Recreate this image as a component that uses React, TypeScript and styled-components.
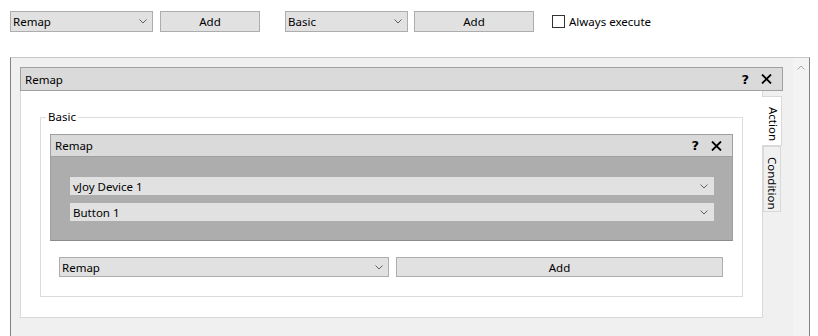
import React from "react"
import styled, { createGlobalStyle } from "styled-components"

const GlobalStyle = createGlobalStyle`
  html, body {
    margin: 0;
    padding: 0;
    background: #ffffff;
    overflow: hidden;
  }
  body {
    font-family: "Segoe UI", "Noto Sans", "Open Sans", sans-serif;
    font-size: 11.5px;
    color: #000000;
  }
`

const Page = styled.div`
  width: 818px;
  height: 336px;
  overflow: hidden;
`
const Toolbar = styled.div`
  display: flex;
  align-items: center;
  height: 21px;
  padding: 11px 0 0 10px;
`
const ComboBox = styled.div<{ $w: number; $h: number; $flat?: boolean; $ml?: number }>`
  display: flex;
  align-items: center;
  justify-content: space-between;
  box-sizing: border-box;
  width: ${p => p.$w}px;
  height: ${p => p.$h}px;
  margin-left: ${p => p.$ml || 0}px;
  padding: 0 5px 0 2px;
  background: #e1e1e1;
  border: 1px solid ${p => (p.$flat ? "#e1e1e1" : "#adadad")};
  white-space: nowrap;
`
const Button = styled.div<{ $w: number; $h: number; $ml: number }>`
  display: flex;
  align-items: center;
  justify-content: center;
  box-sizing: border-box;
  width: ${p => p.$w}px;
  height: ${p => p.$h}px;
  margin-left: ${p => p.$ml}px;
  background: #e1e1e1;
  border: 1px solid #adadad;
`
const Check = styled.div`
  box-sizing: border-box;
  width: 13px;
  height: 13px;
  margin-left: 18px;
  margin-right: 4px;
  background: #ffffff;
  border: 1px solid #333333;
`
const ScrollArea = styled.div`
  display: flex;
  box-sizing: border-box;
  width: 800px;
  height: 280px;
  margin: 25px 0 0 10px;
  border: 1px solid #828282;
  border-top-color: #c8c8c8;
  border-bottom: none;
`
const Viewport = styled.div`
  flex: 1;
  background: #f0f0f0;
  padding: 9px 10px 0 9px;
`
const ScrollBar = styled.div`
  display: flex;
  justify-content: center;
  width: 16px;
  padding-top: 7px;
  box-sizing: border-box;
  background: #f3f3f3;
`
const TitleBar = styled.div<{ $h: number }>`
  display: flex;
  align-items: center;
  box-sizing: border-box;
  height: ${p => p.$h}px;
  padding: 0 10px 0 4px;
  background: #dadada;
  border: 1px solid #a0a0a0;
`
const Title = styled.span`
  flex: 1;
`
const Help = styled.span`
  font-family: "DejaVu Sans", sans-serif;
  font-weight: bold;
  font-size: 13px;
  margin-right: 12px;
`
const TabWidget = styled.div`
  display: flex;
`
const Pane = styled.div`
  box-sizing: border-box;
  width: 743px;
  padding: 26px 19px 20px 19px;
  background: #ffffff;
  border: 1px solid #d9d9d9;
  border-top: none;
`
const TabColumn = styled.div`
  display: flex;
  flex-direction: column;
  padding-top: 5px;
`
const Tab = styled.div<{ $active?: boolean; $h: number }>`
  display: flex;
  justify-content: center;
  box-sizing: border-box;
  width: ${p => (p.$active ? 20 : 18)}px;
  height: ${p => p.$h}px;
  margin-left: ${p => (p.$active ? -1 : 0)}px;
  padding-top: ${p => (p.$active ? 6 : 8)}px;
  background: ${p => (p.$active ? "#ffffff" : "#f0f0f0")};
  border: 1px solid #d9d9d9;
  border-left: ${p => (p.$active ? "none" : "1px solid #d9d9d9")};
  writing-mode: vertical-rl;
`
const GroupBox = styled.div`
  position: relative;
  padding: 16px 9px 19px 9px;
  border: 1px solid #dcdcdc;
`
const GroupLabel = styled.span`
  position: absolute;
  top: -9px;
  left: 5px;
  padding: 0 2px;
  background: #ffffff;
  line-height: 16px;
`
const InnerBody = styled.div`
  display: flex;
  flex-direction: column;
  gap: 8px;
  padding: 20px 19px 19px 19px;
  background: #adadad;
  border: 1px solid #a0a0a0;
  border-top: none;
  border-bottom-color: #8c8c8c;
`
const AddRow = styled.div`
  display: flex;
  margin: 16px 9px 0 9px;
`

function Chevron({ up }: { up?: boolean }) {
  return (
    <svg width="8" height="5" viewBox="0 0 8 5">
      <polyline
        points={up ? "0.5,4.5 4,1 7.5,4.5" : "0.5,0.5 4,4 7.5,0.5"}
        fill="none"
        stroke={up ? "#a6a6a6" : "#606060"}
        strokeWidth="1"
      />
    </svg>
  )
}

function Close() {
  return (
    <svg width="11" height="10" viewBox="0 0 11 10">
      <path d="M1 0.5 L10 9.5 M10 0.5 L1 9.5" stroke="#000" strokeWidth="1.8" />
    </svg>
  )
}

function Combo(props: { text: string; w: number; h: number; flat?: boolean; ml?: number }) {
  return (
    <ComboBox $w={props.w} $h={props.h} $flat={props.flat} $ml={props.ml}>
      <span>{props.text}</span>
      <Chevron />
    </ComboBox>
  )
}

function App() {
  return (
    <Page>
      <GlobalStyle />
      <Toolbar>
        <Combo text="Remap" w={143} h={21} />
        <Button $w={100} $h={21} $ml={7}>Add</Button>
        <Combo text="Basic" w={123} h={21} ml={25} />
        <Button $w={120} $h={21} $ml={6}>Add</Button>
        <Check />
        <span>Always execute</span>
      </Toolbar>
      <ScrollArea>
        <Viewport>
          <TitleBar $h={24}>
            <Title>Remap</Title>
            <Help>?</Help>
            <Close />
          </TitleBar>
          <TabWidget>
            <Pane>
              <GroupBox>
                <GroupLabel>Basic</GroupLabel>
                <TitleBar $h={23}>
                  <Title>Remap</Title>
                  <Help>?</Help>
                  <Close />
                </TitleBar>
                <InnerBody>
                  <Combo text="vJoy Device 1" w={644} h={18} flat />
                  <Combo text="Button 1" w={644} h={18} flat />
                </InnerBody>
                <AddRow>
                  <Combo text="Remap" w={330} h={20} />
                  <Button $w={327} $h={20} $ml={7}>Add</Button>
                </AddRow>
              </GroupBox>
            </Pane>
            <TabColumn>
              <Tab $active $h={50}>Action</Tab>
              <Tab $h={66}>Condition</Tab>
            </TabColumn>
          </TabWidget>
        </Viewport>
        <ScrollBar>
          <Chevron up />
        </ScrollBar>
      </ScrollArea>
    </Page>
  )
}

export default App
